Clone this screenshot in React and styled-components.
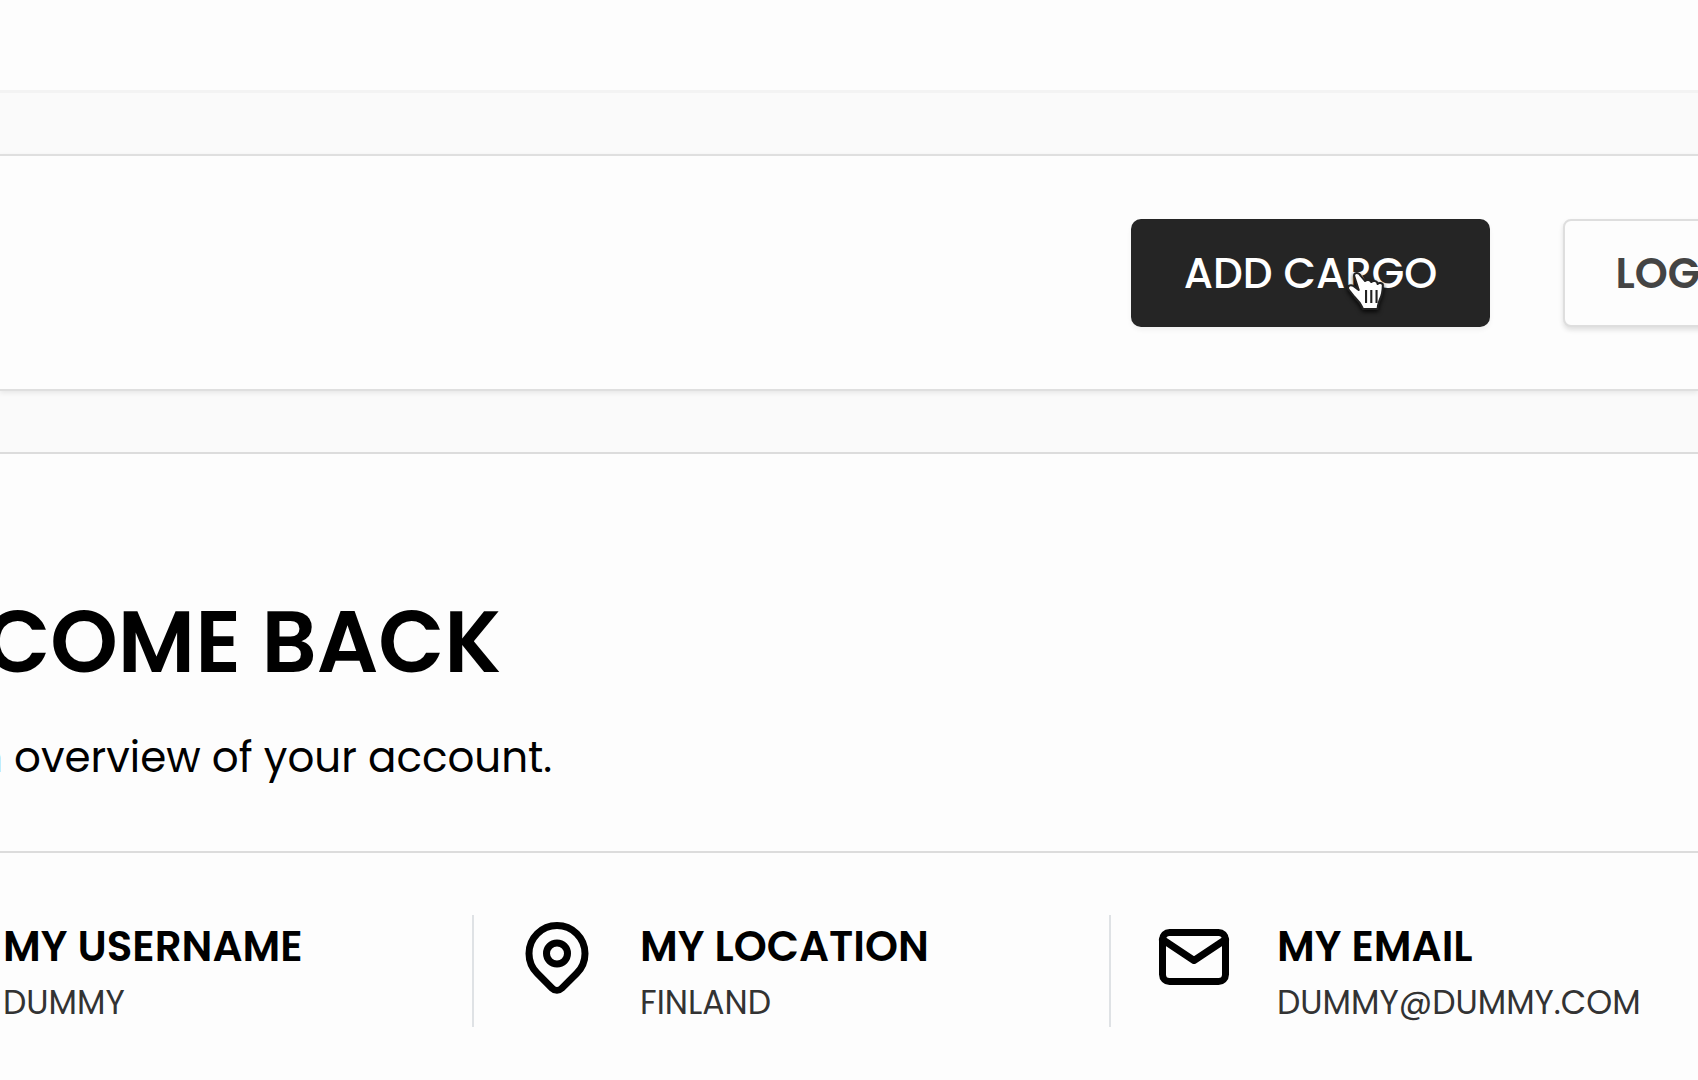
import React from 'react'
import styled, { createGlobalStyle } from 'styled-components'
import { TbUser, TbMapPin, TbMail } from 'react-icons/tb'

const GlobalStyle = createGlobalStyle`
    * {
        box-sizing: border-box;
    }
    body {
        margin: 0;
        background: #fdfdfd;
        color: #000;
        font-family: Poppins, Inter, sans-serif;
        overflow: hidden;
    }
    h1, h2, p {
        margin: 0;
    }
`;

const Page = styled.div`
    display: flex;
    flex-direction: column;
    gap: 61px;
    background: #fafafa;
    overflow: hidden;
`;

const TopBar = styled.div`
    height: 93px;
    background: #fdfdfd;
    border-bottom: 3px solid #f3f3f3;
`;

const Toolbar = styled.nav`
    display: flex;
    justify-content: flex-end;
    gap: 73px;
    padding: 63px 0 62px;
    background: #fdfdfd;
    border: solid #dfdfdf;
    border-width: 2px 0;
    box-shadow: 0 2px 5px rgba(0, 0, 0, 0.08);
`;

const Button = styled.button`
    position: relative;
    flex: none;
    width: ${(props) => props.$width};
    height: 108px;
    margin-right: ${(props) => props.$bleed || '0'};
    border-radius: ${(props) => props.$primary ? '10px' : '8px'};
    border: ${(props) => props.$primary ? 'none' : '2px solid #dedede'};
    background: ${(props) => props.$primary ? '#252525' : '#fdfdfd'};
    color: ${(props) => props.$primary ? '#fff' : '#444'};
    box-shadow: 0 3px 5px rgba(0, 0, 0, ${(props) => props.$primary ? '0.05' : '0.12'});
    font-family: inherit;
    font-size: 42px;
    font-weight: ${(props) => props.$primary ? 500 : 600};
    cursor: pointer;
`;

const Pointer = styled.svg`
    position: absolute;
    left: 213px;
    top: 51px;
    width: 42px;
    height: 44px;
    filter: drop-shadow(0 2px 2px rgba(0, 0, 0, 0.8));
    pointer-events: none;
`;

const Panel = styled.main`
    min-height: 628px;
    background: #fdfdfd;
    border-top: 2px solid #dcdcdc;
`;

const Intro = styled.header`
    display: flex;
    flex-direction: column;
    gap: 21px;
    margin-left: -189px;
    padding: 125px 0 62px;
    border-bottom: 2px solid #dcdcdc;
    white-space: nowrap;
`;

const Title = styled.h1`
    font-size: 86px;
    line-height: 126px;
    font-weight: 600;
`;

const Subtitle = styled.p`
    font-size: 42px;
    line-height: 63px;
`;

const Details = styled.section`
    display: flex;
    margin-left: -163px;
    padding: 62px 0;
`;

const Detail = styled.div`
    display: flex;
    flex: 0 0 637px;
    gap: 41px;
    padding-left: 41px;
    border-right: ${(props) => props.$last ? 'none' : '2px solid #dfe2e5'};

    svg {
        flex: none;
    }
`;

const Label = styled.h2`
    font-size: 42px;
    line-height: 63px;
    font-weight: 600;
    white-space: nowrap;
`;

const Value = styled.p`
    color: #333;
    font-size: 33px;
    line-height: 49px;
    white-space: nowrap;
`;

const details = [
    { icon: TbUser, label: 'MY USERNAME', value: 'DUMMY' },
    { icon: TbMapPin, label: 'MY LOCATION', value: 'FINLAND' },
    { icon: TbMail, label: 'MY EMAIL', value: 'DUMMY@DUMMY.COM' },
]

const Hand = () => {
    return (
        <Pointer viewBox="0 0 40 44" preserveAspectRatio="none" aria-hidden="true">
            <path
                d="M12 3c-2 0-3 2-2 4l4 13-5-4c-3-2-6 0-5 3l6 8 5 6c1 2 2 3 3 6h14c0-4 1-6 2-9 2-4 3-9 3-15 0-2-4-3-5-1 0-3-4-4-6-2-1-2-4-3-6-1L16 6c-1-2-2-3-4-3z"
                fill="#fff"
                stroke="#222"
                strokeWidth="2"
                strokeLinejoin="round"
            />
            <path d="M21 20v13M26 20v13M31 20v13" stroke="#222" strokeWidth="2" />
        </Pointer>
    )
}

const App = () => {
    return (
        <>
            <GlobalStyle />
            <Page>
                <TopBar />
                <Toolbar>
                    <Button $primary $width="359px">
                        ADD CARGO
                        <Hand />
                    </Button>
                    <Button $width="276px" $bleed="-141px">LOGOUT</Button>
                </Toolbar>
                <Panel>
                    <Intro>
                        <Title>WELCOME BACK</Title>
                        <Subtitle>Here's an overview of your account.</Subtitle>
                    </Intro>
                    <Details>
                        {details.map(({ icon: Icon, label, value }, index) => (
                            <Detail key={label} $last={index === details.length - 1}>
                                <Icon size={84} />
                                <div>
                                    <Label>{label}</Label>
                                    <Value>{value}</Value>
                                </div>
                            </Detail>
                        ))}
                    </Details>
                </Panel>
            </Page>
        </>
    )
}

export default App
